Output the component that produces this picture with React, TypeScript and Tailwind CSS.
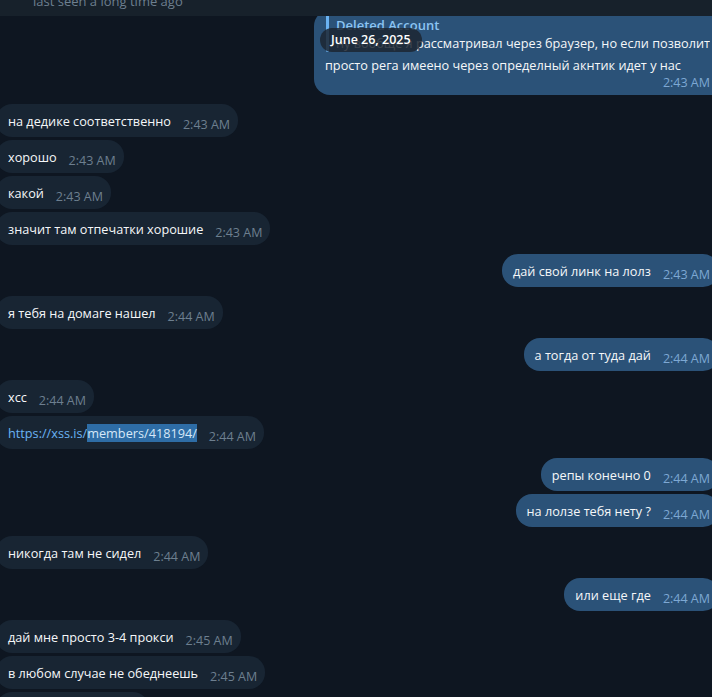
import React from "react";

type Msg = {
  out?: boolean;
  text: React.ReactNode;
  time: string;
  first?: boolean;
};

const messages: Msg[] = [
  { text: "на дедике соответственно", time: "2:43 AM", first: true },
  { text: "хорошо", time: "2:43 AM" },
  { text: "какой", time: "2:43 AM" },
  { text: "значит там отпечатки хорошие", time: "2:43 AM" },
  { out: true, text: "дай свой линк на лолз", time: "2:43 AM", first: true },
  { text: "я тебя на домаге нашел", time: "2:44 AM", first: true },
  { out: true, text: "а тогда от туда дай", time: "2:44 AM", first: true },
  { text: "xcc", time: "2:44 AM", first: true },
  {
    text: (
      <span className="text-[#6ab3f3]">
        https://xss.is/
        <span className="bg-[#2e6da6] text-[#d6e8f8]">members/418194/</span>
      </span>
    ),
    time: "2:44 AM",
  },
  { out: true, text: "репы конечно 0", time: "2:44 AM", first: true },
  { out: true, text: "на лолзе тебя нету ?", time: "2:44 AM" },
  { text: "никогда там не сидел", time: "2:44 AM", first: true },
  { out: true, text: "или еще где", time: "2:44 AM", first: true },
  { text: "дай мне просто 3-4 прокси", time: "2:45 AM", first: true },
  { text: "в любом случае не обеднеешь", time: "2:45 AM" },
  { text: "ну давай же", time: "2:45 AM" },
];

const Bubble = ({ msg }: { msg: Msg }) => {
  const side = msg.out
    ? "self-end bg-[#2b5278] pl-[11px] pr-[9px]"
    : "self-start bg-[#182533] pl-[12px] pr-[8px]";
  return (
    <div
      className={`${side} ${msg.first ? "mt-[9px]" : "mt-[3px]"} flex h-[33px] shrink-0 items-start rounded-[16px] pt-[8px]`}
    >
      <span className="whitespace-nowrap text-[12.7px] leading-[18px] text-[#f5f7f9]">
        {msg.text}
      </span>
      <span
        className={`ml-[12px] mt-[5px] whitespace-nowrap text-[12.5px] leading-[16px] ${msg.out ? "text-[#7da8d3]" : "text-[#6d7f8f]"}`}
      >
        {msg.time}
      </span>
    </div>
  );
};

export default function App() {
  return (
    <div
      className="relative flex h-[697px] w-full flex-col overflow-hidden bg-[#0e1621]"
      style={{ fontFamily: '"Open Sans", "Noto Sans", sans-serif' }}
    >
      <div className="relative z-10 h-[16px] shrink-0 overflow-hidden bg-[#17212b] pl-[33px]">
        <div className="-mt-[8px] text-[13px] leading-[18px] text-[#6d7f8f]">
          last seen a long time ago
        </div>
      </div>

      <div className="-ml-[4px] -mr-[7px] flex flex-col">
        {/* reply bubble, top cut by the header */}
        <div className="-mt-[6px] ml-[318px] flex shrink-0 flex-col rounded-bl-[16px] rounded-tl-[16px] bg-[#2b5278] pb-[4px] pl-[11px] pr-[9px] pt-[4px]">
          <div className="flex">
            <div className="ml-[1px] w-[3px] rounded-full bg-[#6ab3f3]" />
            <div className="min-w-0 flex-1 overflow-hidden pl-[7px] pt-[2px]">
              <div className="whitespace-nowrap text-[13px] font-semibold leading-[18px] text-[#8cc4f2]">
                Deleted Account
              </div>
              <div className="whitespace-nowrap text-[12.7px] leading-[18px] text-[#f5f7f9]">
                ну вообще я рассматривал через браузер, но если позволит в любом
              </div>
            </div>
          </div>
          <div className="mt-[4px] whitespace-nowrap text-[12.7px] leading-[18px] text-[#f5f7f9]">
            просто рега имеено через определный акнтик идет у нас
          </div>
          <div className="mt-[1px] self-end text-[12.5px] leading-[16px] text-[#7da8d3]">
            2:43 AM
          </div>
        </div>

        {messages.map((m, i) => (
          <Bubble key={i} msg={m} />
        ))}
      </div>

      <div className="absolute left-[320px] top-[28px] z-20 flex h-[24px] items-center rounded-full bg-[#1c2631]/85 px-[11px]">
        <span className="whitespace-nowrap text-[12.5px] font-semibold leading-[18px] text-white">
          June 26, 2025
        </span>
      </div>
    </div>
  );
}
